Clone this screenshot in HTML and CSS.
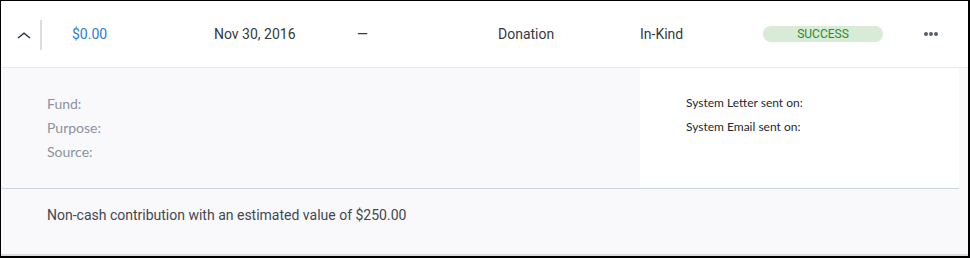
FILE: index.html
```html
<!DOCTYPE html>
<html lang="en">
<head>
<meta charset="utf-8">
<title>Transaction</title>
<link rel="stylesheet" href="styles.css">
</head>
<body>
<div class="frame">
  <div class="row">
    <div class="cell toggle">
      <svg class="chevron" width="14" height="7" viewBox="0 0 14 7"><polyline points="1,6 7,1.2 13,6" fill="none" stroke="#2c3d4f" stroke-width="1.6"/></svg>
    </div>
    <div class="sep"></div>
    <div class="cell amount">$0.00</div>
    <div class="cell">Nov 30, 2016</div>
    <div class="cell">—</div>
    <div class="cell">Donation</div>
    <div class="cell">In-Kind</div>
    <div class="cell"><span class="badge">SUCCESS</span></div>
    <div class="cell"></div>
    <div class="cell">
      <svg class="dots" width="14" height="4" viewBox="0 0 14 4"><circle cx="2" cy="2" r="2" fill="#56606b"/><circle cx="7" cy="2" r="2" fill="#56606b"/><circle cx="12" cy="2" r="2" fill="#56606b"/></svg>
    </div>
  </div>
  <div class="details">
    <div class="info">
      <div class="label">Fund:</div>
      <div class="label">Purpose:</div>
      <div class="label">Source:</div>
    </div>
    <div class="system">
      <div class="sys">System Letter sent on:</div>
      <div class="sys">System Email sent on:</div>
    </div>
  </div>
  <div class="footer">Non-cash contribution with an estimated value of $250.00</div>
</div>
</body>
</html>
```
FILE: styles.css
```css
html, body {
  margin: 0;
  padding: 0;
}
body {
  font-family: Roboto, "Liberation Sans", sans-serif;
  background: #ffffff;
}
.frame {
  width: 970px;
  height: 258px;
  box-sizing: border-box;
  border-top: 1px solid #000;
  border-left: 1px solid #000;
  border-right: 2px solid #000;
  border-bottom: 2px solid #000;
  background: #f9f9fc;
  display: flex;
  flex-direction: column;
}
.row {
  height: 67px;
  flex: none;
  box-sizing: border-box;
  padding-bottom: 1px;
  background: #fff;
  border-bottom: 1px solid #e7e7f0;
  display: grid;
  grid-template-columns: 39px 2px 172px 143px 141px 142px 123px 120px 41px 1fr;
  align-items: center;
  font-size: 14px;
  line-height: 20px;
  color: #333a44;
}
.cell {
  white-space: nowrap;
}
.toggle {
  padding-left: 16px;
  display: flex;
  align-items: center;
}
.chevron {
  display: block;
  margin-top: 3px;
}
.sep {
  width: 2px;
  height: 30px;
  background: #dcdde1;
  margin-top: 2px;
}
.amount {
  padding-left: 30px;
  color: #2c7dd6;
}
.badge {
  display: block;
  width: 120px;
  height: 16px;
  border-radius: 8px;
  background: #d8ebd6;
  color: #2f8a2f;
  font-size: 12px;
  line-height: 16px;
  text-align: center;
  margin-top: 1px;
}
.dots {
  display: block;
  margin-top: 1px;
}
.details {
  height: 121px;
  flex: none;
  box-sizing: border-box;
  margin-right: 9px;
  display: flex;
  border-bottom: 1px solid #cfd5dd;
}
.info {
  width: 639px;
  box-sizing: border-box;
  padding: 24px 0 0 46px;
  background: #f9f9fc;
}
.label {
  font-family: Lato, "Open Sans", sans-serif;
  font-size: 14px;
  line-height: 24px;
  color: #8a92a0;
}
.system {
  flex: 1;
  background: #fff;
  padding: 23px 0 0 46px;
}
.sys {
  font-family: Lato, "Open Sans", sans-serif;
  font-size: 12px;
  line-height: 24px;
  color: #1f2833;
}
.footer {
  flex: 1;
  box-sizing: border-box;
  padding: 16px 0 0 46px;
  font-size: 14px;
  line-height: 20px;
  color: #42474f;
  border-bottom: 2px solid #dcdcde;
}
```
